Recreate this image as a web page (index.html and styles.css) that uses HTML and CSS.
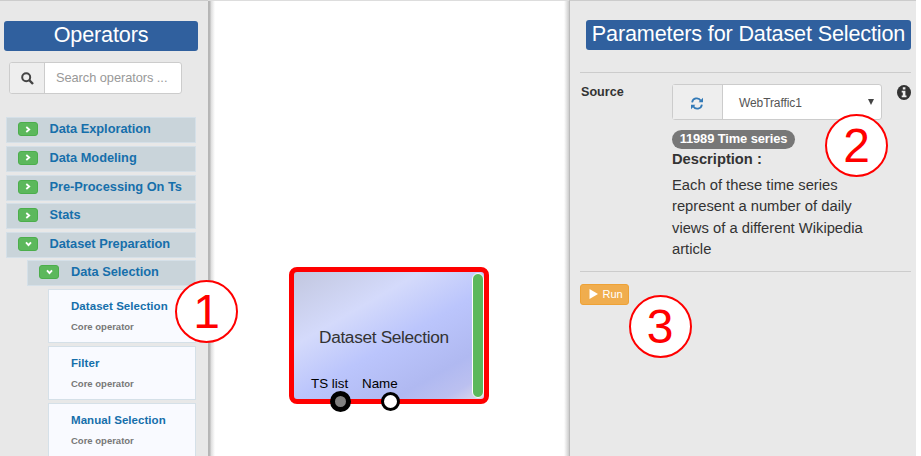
FILE: index.html
```html
<!DOCTYPE html>
<html lang="en">
<head>
<meta charset="utf-8">
<title>Operators</title>
<link rel="stylesheet" href="styles.css">
</head>
<body>
<div class="app">
  <aside class="left">
    <h1 class="title">Operators</h1>
    <div class="search">
      <span class="addon"><svg width="13" height="13" viewBox="0 0 13 13"><circle cx="5.2" cy="5.2" r="4" fill="none" stroke="#444" stroke-width="2"/><path d="M8.2 8.2L12 12" stroke="#444" stroke-width="2.4"/></svg></span>
      <span class="query">Search operators ...</span>
    </div>
    <ul class="tree">
      <li class="row"><i class="toggle"><svg width="6" height="7" viewBox="0 0 6 7"><path d="M1.3 1L4.2 3.5L1.3 6"/></svg></i><span>Data Exploration</span></li>
      <li class="row"><i class="toggle"><svg width="6" height="7" viewBox="0 0 6 7"><path d="M1.3 1L4.2 3.5L1.3 6"/></svg></i><span>Data Modeling</span></li>
      <li class="row"><i class="toggle"><svg width="6" height="7" viewBox="0 0 6 7"><path d="M1.3 1L4.2 3.5L1.3 6"/></svg></i><span>Pre-Processing On Ts</span></li>
      <li class="row"><i class="toggle"><svg width="6" height="7" viewBox="0 0 6 7"><path d="M1.3 1L4.2 3.5L1.3 6"/></svg></i><span>Stats</span></li>
      <li class="row"><i class="toggle"><svg width="7" height="6" viewBox="0 0 7 6"><path d="M1 1.3L3.5 4.2L6 1.3"/></svg></i><span>Dataset Preparation</span></li>
      <li class="row sub"><i class="toggle"><svg width="7" height="6" viewBox="0 0 7 6"><path d="M1 1.3L3.5 4.2L6 1.3"/></svg></i><span>Data Selection</span></li>
      <li class="card"><b>Dataset Selection</b><small>Core operator</small></li>
      <li class="card"><b>Filter</b><small>Core operator</small></li>
      <li class="card"><b>Manual Selection</b><small>Core operator</small></li>
    </ul>
  </aside>
  <main class="canvas">
    <div class="node">
      <span class="node-name">Dataset Selection</span>
      <span class="status"></span>
      <span class="port-label ts">TS list</span>
      <span class="port-label nm">Name</span>
      <i class="port linked"></i>
      <i class="port open"></i>
    </div>
  </main>
  <aside class="right">
    <h1 class="title wide">Parameters for Dataset Selection</h1>
    <section class="params">
      <strong class="label">Source</strong>
      <div class="field">
        <div class="select">
          <span class="refresh"><svg width="12" height="13" viewBox="0 0 12 13"><g fill="none" stroke="#337ab7" stroke-width="1.8"><path d="M1.1 5.4A4.7 4.7 0 0 1 9.8 3.7"/><path d="M10.9 7.6A4.7 4.7 0 0 1 2.2 9.3"/></g><path d="M12 .8V5.2H7.6ZM0 12.2V7.8H4.4Z" fill="#337ab7"/></svg></span>
          <span class="value">WebTraffic1</span>
          <svg class="arrow" width="6" height="6" viewBox="0 0 6 6"><path d="M0 0H6L3 6Z" fill="#444"/></svg>
        </div>
        <span class="badge">11989 Time series</span>
        <strong class="desc-title">Description :</strong>
        <p class="desc">Each of these time series<br>represent a number of daily<br>views of a different Wikipedia<br>article</p>
      </div>
      <svg class="info" width="14" height="15" viewBox="0 0 14 15"><ellipse cx="7" cy="7.5" rx="7" ry="7.5" fill="#333"/><path d="M5.8 2.3H8.4V4.6H5.8ZM4.7 5.8H8.4V10.5H9.5V12.2H4.7V10.5H5.8V7.4H4.7Z" fill="#eee"/></svg>
    </section>
    <button class="run"><svg width="9" height="10" viewBox="0 0 9 10"><path d="M.5 0L9 5L.5 10Z" fill="#fff"/></svg><span>Run</span></button>
  </aside>
  <span class="marker m1">1</span>
  <span class="marker m2">2</span>
  <span class="marker m3">3</span>
</div>
</body>
</html>
```
FILE: styles.css
```css
* { box-sizing: border-box; }
body { margin: 0; background: #fff; font-family: "Liberation Sans", Arial, sans-serif; color: #333; }
.app { position: relative; display: flex; width: 916px; height: 456px; overflow: hidden; white-space: nowrap; }
.left { width: 208px; padding: 20px 10px 0 4px; background: #e8e8e8; border-top: 1px solid #ccc; }
.canvas { position: relative; flex: 1; border-top: 1px solid #ddd; background: linear-gradient(90deg, #b4b4b4 0, #b8b8b8 2px, #ddd 3px, #fff 7px, #fff calc(100% - 5px), #ccc 100%); }
.right { width: 347px; padding: 19px 6px 0 11px; background: #e9e9e9; border-top: 1px solid #ccc; border-left: 1px solid #bbb; }
.title { margin: 0; height: 30px; line-height: 27px; border-radius: 3px; background: #30609e; color: #fff; font-size: 21.6px; font-weight: 400; text-align: center; letter-spacing: -.15px; }
.wide { margin-left: 5px; width: 325px; }
.search { display: flex; width: 173px; height: 32px; margin: 11px 0 0 5px; border: 1px solid #ccc; border-radius: 3px; background: #fff; overflow: hidden; }
.addon { display: flex; align-items: center; justify-content: center; width: 35px; background: #eee; border-right: 1px solid #ccc; }
.query { padding-left: 11px; line-height: 30px; color: #999; font-size: 12.8px; letter-spacing: -.05px; }
.tree { list-style: none; margin: 23.4px 0 0 2px; padding: 0; width: 190px; }
.row { display: flex; height: 26px; margin-bottom: 2.6px; padding-left: 11px; border: 1px solid #d5e0e8; background: #c9d4da; color: #166fab; font-size: 12.8px; font-weight: 700; line-height: 21.6px; }
.row span { margin-left: 11.5px; letter-spacing: -.02px; }
.sub { margin-left: 21px; }
.sub span { margin-left: 12px; }
.toggle { display: flex; align-items: center; justify-content: center; width: 20px; height: 14px; margin-top: 4px; border: 1px solid #4cae4c; border-radius: 3px; background: #5cb85c; }
.toggle path { fill: none; stroke: #fff; stroke-width: 1.8; }
.card { height: 54.5px; margin: 0 0 2.5px 42px; padding: 9px 0 0 22px; border: 1px solid #d5e0e8; background: #f9faff; }
.card b, .card small { display: block; }
.card b { color: #166fab; font-size: 11.5px; line-height: 15px; letter-spacing: .05px; }
.card small { margin-top: 7px; color: #777; font-size: 9.5px; line-height: 12px; font-weight: 700; }
.node { position: absolute; left: 81px; top: 266px; width: 200px; height: 137px; border: 5px solid red; border-radius: 8px; background: linear-gradient(150deg, #c2c7df 0%, #d4dafb 31%, #bbc5fc 54%, #b0b9f1 78%, #bbc0f0 90%, #dedae9 100%); }
.node-name { display: block; margin: 55px 0 0 25px; font-size: 17.3px; line-height: 20px; letter-spacing: -.34px; }
.status { position: absolute; right: 0; top: 1px; width: 12px; height: 125px; border: 1px solid #fff; border-radius: 6px; background: #5cb85c; }
.port-label { position: absolute; top: 104px; color: #000; font-size: 13.4px; line-height: 15px; }
.ts { left: 17px; }
.nm { left: 68px; }
.port { position: absolute; border-radius: 50%; }
.linked { left: 36px; top: 119px; width: 21px; height: 21px; border: 5px solid #000; background: #808080; }
.open { left: 86.5px; top: 120px; width: 19px; height: 19px; border: 3px solid #000; background: #fff; }
.params { display: flex; height: 200px; width: 331px; margin: 22px 0 12px -1px; border: solid #ccc; border-width: 1px 0; padding-top: 11px; }
.label { width: 92px; padding: 0 0 0 1px; font-size: 12.6px; line-height: 17px; }
.field { width: 209px; }
.select { display: flex; align-items: center; width: 210px; height: 36px; border: 1px solid #ccc; border-radius: 3px; background: #fff; }
.refresh { display: flex; align-items: center; justify-content: center; align-self: stretch; width: 50px; border-right: 1px solid #ccc; background: #eee; padding: 3px 2px 0 0; }
.value { margin-left: 16px; color: #555; font-size: 12px; letter-spacing: -.1px; padding-top: 1px; }
.arrow { margin: 0 7px 0 auto; }
.badge { display: block; width: 123px; height: 19px; margin-top: 10px; border-radius: 10px; background: #777; color: #fff; font-size: 12.9px; font-weight: 700; line-height: 18px; text-align: center; letter-spacing: -.1px; }
.desc-title { display: block; font-size: 14.7px; line-height: 21px; }
.desc { margin: 5px 0 0; font-size: 14.75px; line-height: 21.3px; }
.info { margin: 1px 0 0 16px; }
.run { display: flex; align-items: center; width: 49px; height: 21px; margin-left: -1px; padding: 0 0 2px 8px; border: 1px solid #eea236; border-radius: 3px; background: #f0ad4e; color: #fff; font: 11px "Liberation Sans", Arial, sans-serif; }
.run span { margin-left: 4.5px; }
.marker { position: absolute; width: 63px; height: 63px; border: 2px solid red; border-radius: 50%; background: #fff; color: red; font-size: 48px; line-height: 59px; text-align: center; }
.m1 { left: 175px; top: 280px; }
.m2 { left: 825px; top: 114px; }
.m3 { left: 628.5px; top: 295px; }
```
